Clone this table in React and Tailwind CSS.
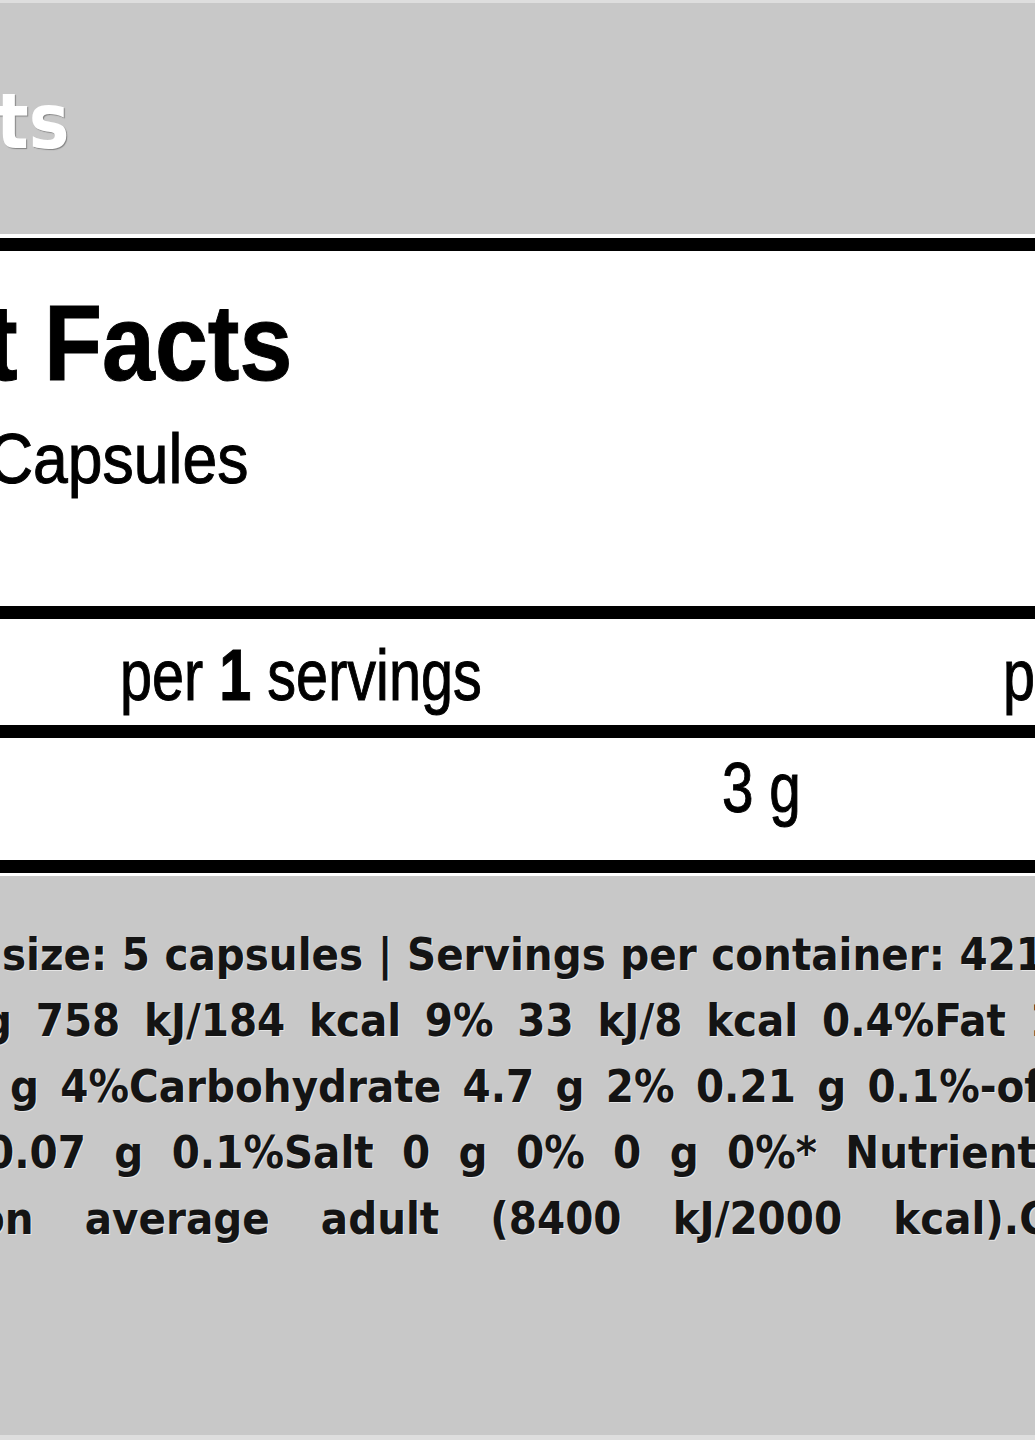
// Nutrition label crop – grey band, white facts panel with thick black rules, grey justified notes
const notes = [
  { box: "ml-[2px] w-[1042px]", words: "size: 5 capsules | Servings per container: 421" },
  { box: "-ml-[17px] w-[1075px]", words: "g 758 kJ/184 kcal 9% 33 kJ/8 kcal 0.4%Fat 1" },
  { box: "ml-[10px] w-[1032px]", words: "g 4%Carbohydrate 4.7 g 2% 0.21 g 0.1%-of" },
  { box: "-ml-[14px] w-[1051px]", words: "0.07 g 0.1%Salt 0 g 0% 0 g 0%* Nutrient" },
  { box: "-ml-[23px] w-[1072px]", words: "on average adult (8400 kJ/2000 kcal).C" },
];

const narrow = "font-['Liberation_Sans','Arial',sans-serif]";

export default function App() {
  return (
    <div className="w-[1035px] h-[1440px] overflow-hidden bg-[#c8c8c8] border-t-[3px] border-b-[5px] border-[#dedede] flex flex-col">
      {/* grey header band */}
      <div className="h-[231px] shrink-0 pt-[81px]">
        <div className="-ml-[4px] text-[76px] leading-none font-bold text-white font-['DejaVu_Sans_Condensed','DejaVu_Sans',sans-serif] [font-stretch:condensed] [text-shadow:1px_1px_1px_rgba(0,0,0,0.35)]">
          ts
        </div>
      </div>

      {/* white facts panel */}
      <div className={`bg-white pt-[4px] pb-[3px] text-black shrink-0 ${narrow}`}>
        <div className="border-t-[13px] border-black h-[368px] pt-[38px]">
          <div className="-ml-[14px] text-[108px] leading-none font-bold whitespace-nowrap origin-left scale-x-[0.88] [-webkit-text-stroke:1px_black]">
            t Facts
          </div>
          <div className="-ml-[12px] mt-[26px] text-[71px] leading-none whitespace-nowrap origin-left scale-x-[0.88] [-webkit-text-stroke:1px_black]">
            Capsules
          </div>
        </div>
        <div className="border-t-[13px] border-black h-[119px] pt-[20px] flex whitespace-nowrap text-[72px] leading-none [-webkit-text-stroke:1px_black]">
          <div className="ml-[120px] w-[883px] shrink-0 origin-left scale-x-[0.8]">
            per <span className="font-bold">1</span> servings
          </div>
          <div className="shrink-0 origin-left scale-x-[0.8]">per 100 g</div>
        </div>
        <div className="border-t-[13px] border-black h-[135px] pt-[15px] text-[70px] leading-none whitespace-nowrap [-webkit-text-stroke:1px_black]">
          <div className="ml-[722px] origin-left scale-x-[0.81]">3 g</div>
        </div>
        <div className="h-[13px] bg-black" />
      </div>

      {/* grey justified notes */}
      <div className="pt-[46px] text-[45px] leading-[66px] font-bold text-[#141414] font-['DejaVu_Sans_Condensed','DejaVu_Sans',sans-serif] [font-stretch:condensed] [text-shadow:1px_1px_0_rgba(255,255,255,0.55)]">
        {notes.map((line, i) => (
          <div key={i} className={`flex justify-between whitespace-nowrap ${line.box}`}>
            {line.words.split(" ").map((w, j) => (
              <span key={j}>{w}</span>
            ))}
          </div>
        ))}
      </div>
    </div>
  );
}
